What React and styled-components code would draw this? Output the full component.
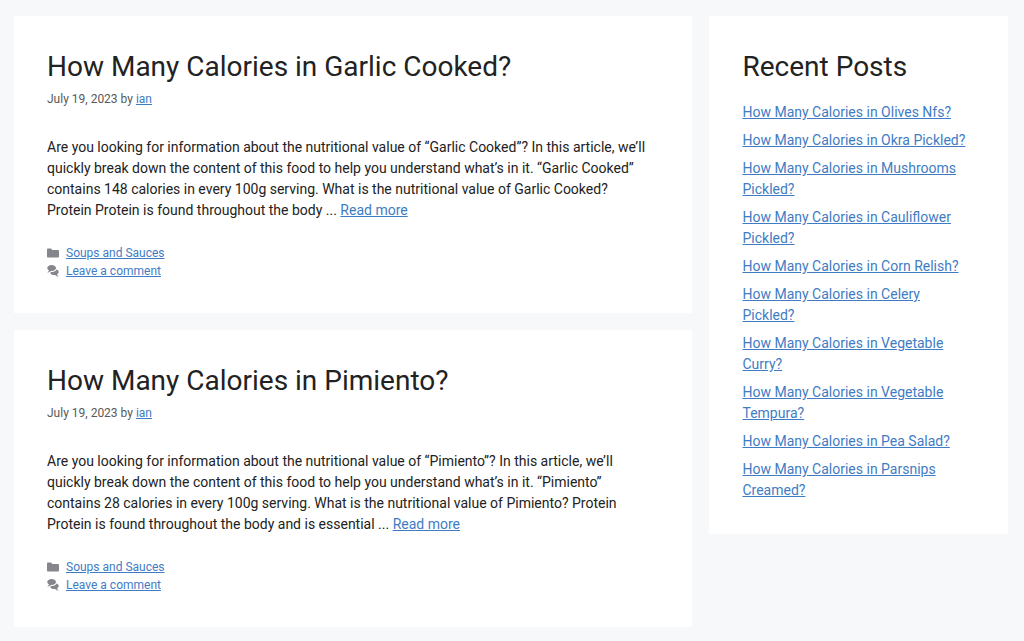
import React from "react";
import styled, { createGlobalStyle } from "styled-components";

const GlobalStyle = createGlobalStyle`
  * {
    box-sizing: border-box;
  }
  body {
    margin: 0;
    background-color: #f7f8f9;
    color: #222222;
    font-family: Roboto, "Liberation Sans", sans-serif;
    font-size: 14px;
    line-height: 21px;
  }
`;

const Page = styled.div`
  display: grid;
  grid-template-columns: 25fr 11fr;
  align-items: start;
  gap: 17px;
  padding: 16px 16px 14px 14px;
`;

const Main = styled.main`
  display: flex;
  flex-direction: column;
  gap: 17px;
`;

const Card = styled.article`
  background-color: #ffffff;
  padding: 33px;
`;

const Heading = styled.h2`
  margin: 0;
  font-size: 28px;
  font-weight: 400;
  line-height: 36px;
`;

const Link = styled.a`
  color: #3f7cc4;
  text-decoration: underline;
`;

const Meta = styled.div`
  margin-top: 5px;
  color: #595959;
  font-size: 12px;
  line-height: 18px;
`;

const Summary = styled.p`
  margin: 29px 0 23px;
  padding-right: 8px;
`;

const FooterRow = styled.div`
  display: flex;
  align-items: center;
  gap: 7px;
  font-size: 12px;
  line-height: 18px;
`;

const Icon = styled.svg`
  width: 12px;
  height: 12px;
  fill: #85858c;
`;

const RecentList = styled.ul`
  display: flex;
  flex-direction: column;
  gap: 7px;
  margin: 17px 0 0;
  padding: 0;
  list-style: none;
`;

const posts = [
  {
    title: "How Many Calories in Garlic Cooked?",
    summary:
      "Are you looking for information about the nutritional value of “Garlic Cooked”? In this article, we’ll quickly break down the content of this food to help you understand what’s in it. “Garlic Cooked” contains 148 calories in every 100g serving. What is the nutritional value of Garlic Cooked? Protein Protein is found throughout the body ...",
  },
  {
    title: "How Many Calories in Pimiento?",
    summary:
      "Are you looking for information about the nutritional value of “Pimiento”? In this article, we’ll quickly break down the content of this food to help you understand what’s in it. “Pimiento” contains 28 calories in every 100g serving. What is the nutritional value of Pimiento? Protein Protein is found throughout the body and is essential ...",
  },
];

const recentPosts = [
  "How Many Calories in Olives Nfs?",
  "How Many Calories in Okra Pickled?",
  "How Many Calories in Mushrooms Pickled?",
  "How Many Calories in Cauliflower Pickled?",
  "How Many Calories in Corn Relish?",
  "How Many Calories in Celery Pickled?",
  "How Many Calories in Vegetable Curry?",
  "How Many Calories in Vegetable Tempura?",
  "How Many Calories in Pea Salad?",
  "How Many Calories in Parsnips Creamed?",
];

const FolderIcon = () => (
  <Icon viewBox="0 0 512 512" aria-hidden="true">
    <path d="M0 112c0-26.51 21.49-48 48-48h110.014a48 48 0 0143.592 27.907l12.349 26.791A16 16 0 00228.486 128H464c26.51 0 48 21.49 48 48v224c0 26.51-21.49 48-48 48H48c-26.51 0-48-21.49-48-48V112z" />
  </Icon>
);

const CommentsIcon = () => (
  <Icon viewBox="0 0 512 512" aria-hidden="true">
    <path d="M132.838 329.973a435.298 435.298 0 0016.769-9.004c13.363-7.574 26.587-16.142 37.419-25.507 7.544.597 15.27.925 23.098.925 54.905 0 105.634-15.311 143.285-41.28 23.728-16.365 43.115-37.692 54.155-62.645 54.699 22.205 91.498 63.272 91.498 110.286 0 42.186-29.658 79.498-75.09 102.828 23.46 49.216 75.09 101.709 75.09 101.709s-115.837-38.35-154.424-78.46c-9.956 1.12-20.297 1.758-30.793 1.758-88.727 0-162.927-43.071-181.007-100.61z" />
    <path d="M383.371 132.502c0 70.603-82.961 127.787-185.216 127.787-10.496 0-20.837-.639-30.793-1.757-38.587 40.093-154.424 78.42-154.424 78.42s51.63-52.472 75.09-101.67c-45.432-23.321-75.09-60.619-75.09-102.78C12.938 61.9 95.9 4.716 198.155 4.716 300.41 4.715 383.37 61.9 383.37 132.502z" />
  </Icon>
);

const PostCard = ({ post }) => (
  <Card>
    <Heading>{post.title}</Heading>
    <Meta>
      July 19, 2023 by <Link href="#">ian</Link>
    </Meta>
    <Summary>
      {post.summary} <Link href="#">Read more</Link>
    </Summary>
    <footer>
      <FooterRow>
        <FolderIcon />
        <Link href="#">Soups and Sauces</Link>
      </FooterRow>
      <FooterRow>
        <CommentsIcon />
        <Link href="#">Leave a comment</Link>
      </FooterRow>
    </footer>
  </Card>
);

const App = () => (
  <>
    <GlobalStyle />
    <Page>
      <Main>
        {posts.map((post) => (
          <PostCard key={post.title} post={post} />
        ))}
      </Main>
      <Card as="aside">
        <Heading>Recent Posts</Heading>
        <RecentList>
          {recentPosts.map((title) => (
            <li key={title}>
              <Link href="#">{title}</Link>
            </li>
          ))}
        </RecentList>
      </Card>
    </Page>
  </>
);

export default App;
